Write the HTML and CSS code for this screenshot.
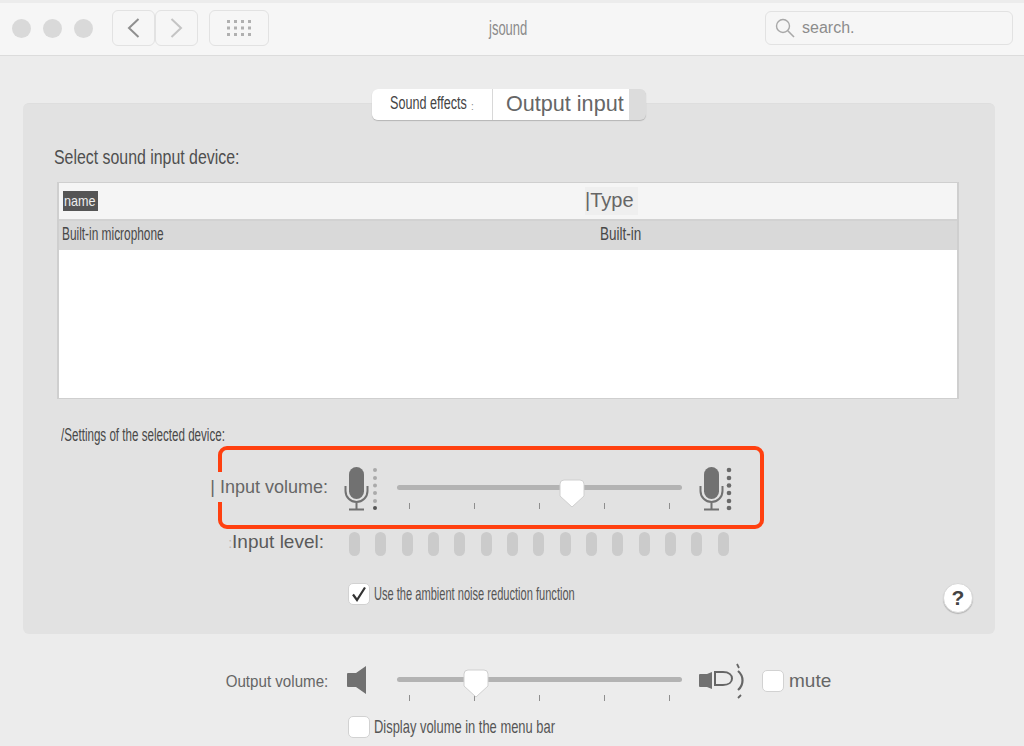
FILE: index.html
```html
<!DOCTYPE html>
<html lang="en">
<head>
    <meta charset="UTF-8">
    <title>jsound</title>
    <link rel="stylesheet" href="styles.css">
</head>
<body>
    <header class="toolbar">
        <div class="lights">
            <span class="light"></span>
            <span class="light"></span>
            <span class="light"></span>
        </div>
        <div class="nav">
            <button class="tool-btn nav-btn">
                <svg width="13" height="20" viewBox="0 0 13 20"><path d="M11.500 1 2 10l9.500 9" fill="none" stroke="#8f8f8f" stroke-width="2"/></svg>
            </button>
            <button class="tool-btn nav-btn">
                <svg width="13" height="20" viewBox="0 0 13 20"><path d="M1.500 1 11 10l-9.500 9" fill="none" stroke="#c4c4c4" stroke-width="2"/></svg>
            </button>
        </div>
        <button class="tool-btn grid-btn">
            <svg width="24" height="16" viewBox="0 0 24 16" fill="#b0b0b0">
                <rect x="0" y="0" width="3" height="3"/><rect x="7" y="0" width="3" height="3"/><rect x="14" y="0" width="3" height="3"/><rect x="21" y="0" width="3" height="3"/>
                <rect x="0" y="6.500" width="3" height="3"/><rect x="7" y="6.500" width="3" height="3"/><rect x="14" y="6.500" width="3" height="3"/><rect x="21" y="6.500" width="3" height="3"/>
                <rect x="0" y="13" width="3" height="3"/><rect x="7" y="13" width="3" height="3"/><rect x="14" y="13" width="3" height="3"/><rect x="21" y="13" width="3" height="3"/>
            </svg>
        </button>
        <div class="title"><span class="narrow title-text">jsound</span></div>
        <div class="search">
            <svg width="20" height="20" viewBox="0 0 20 20"><circle cx="8" cy="8" r="6.500" fill="none" stroke="#a8a8a8" stroke-width="1.400"/><path d="M12.800 12.800 19 19" stroke="#a8a8a8" stroke-width="1.600"/></svg>
            <span>search.</span>
        </div>
    </header>

    <main>
        <section class="panel">
            <div class="tabs">
                <div class="tab tab-sound">
                    <span class="narrow sound-text">Sound effects</span>
                    <span class="tab-mark">:</span>
                </div>
                <div class="tab tab-output">Output input</div>
            </div>

            <p class="device-title"><span class="narrow device-text">Select sound input device:</span></p>

            <div class="device-table">
                <div class="table-head">
                    <span class="col-name"><span class="narrow name-text">name</span></span>
                    <span class="col-type">|Type</span>
                </div>
                <div class="table-row">
                    <span class="cell-name"><span class="narrow mic-text">Built-in microphone</span></span>
                    <span class="narrow type-text">Built-in</span>
                </div>
            </div>

            <p class="settings-title"><span class="narrow settings-text">/Settings of the selected device:</span></p>

            <div class="input-volume">
                <div class="highlight"></div>
                <div class="row-label"><span class="label-text">| Input volume:</span></div>
                <svg class="mic" width="25" height="45" viewBox="0 0 25 45">
                    <rect x="5" y="1" width="15" height="32" rx="7.500" fill="#717171"/>
                    <path d="M1.500 20v5a11 11 0 0 0 22 0v-5M12.500 36v7M5 43.500h15" fill="none" stroke="#717171" stroke-width="2"/>
                </svg>
                <svg class="dots" width="6" height="44" viewBox="0 0 6 44">
                    <circle cx="3" cy="3" r="2" fill="#aaa"/><circle cx="3" cy="11" r="2" fill="#aaa"/><circle cx="3" cy="18.500" r="2" fill="#aaa"/><circle cx="3" cy="26" r="2" fill="#aaa"/><circle cx="3" cy="34" r="2" fill="#aaa"/><circle cx="3" cy="41" r="2" fill="#555"/>
                </svg>
                <div class="slider slider-input">
                    <div class="track"></div>
                    <svg class="thumb" width="26" height="29" viewBox="0 0 26 29"><path d="M1 5a4 4 0 0 1 4-4h16a4 4 0 0 1 4 4v12L13 28 1 17z" fill="#fff" stroke="#d0d0d0"/></svg>
                    <div class="ticks"><i></i><i></i><i></i><i></i><i></i></div>
                </div>
                <svg class="mic" width="25" height="45" viewBox="0 0 25 45">
                    <rect x="5" y="1" width="15" height="32" rx="7.500" fill="#717171"/>
                    <path d="M1.500 20v5a11 11 0 0 0 22 0v-5M12.500 36v7M5 43.500h15" fill="none" stroke="#717171" stroke-width="2"/>
                </svg>
                <svg class="dots dots-full" width="6" height="44" viewBox="0 0 6 44" fill="#6a6a6a">
                    <circle cx="3" cy="3" r="2.300"/><circle cx="3" cy="11" r="2.300"/><circle cx="3" cy="18.500" r="2.300"/><circle cx="3" cy="26" r="2.300"/><circle cx="3" cy="34" r="2.300"/><circle cx="3" cy="41" r="2.300"/>
                </svg>
            </div>

            <div class="input-level">
                <div class="row-label"><span class="level-mark">:</span>Input level:</div>
                <div class="level-bars">
                    <i></i><i></i><i></i><i></i><i></i><i></i><i></i><i></i><i></i><i></i><i></i><i></i><i></i><i></i><i></i>
                </div>
            </div>

            <div class="noise-row">
                <span class="checkbox">
                    <svg width="16" height="16" viewBox="0 0 16 16"><path d="M2 8.500 6 14 14 1.500" fill="none" stroke="#333" stroke-width="2.200"/></svg>
                </span>
                <span class="check-label"><span class="narrow noise-text">Use the ambient noise reduction function</span></span>
                <button class="help">?</button>
            </div>
        </section>

        <div class="output-volume">
            <div class="row-label"><span class="narrow output-text">Output volume:</span></div>
            <svg class="speaker" width="20" height="28" viewBox="0 0 20 28"><path d="M1 7h8L19 0v28L9 21H1a1 1 0 0 1-1-1V8a1 1 0 0 1 1-1z" fill="#717171"/></svg>
            <div class="slider slider-output">
                <div class="track"></div>
                <svg class="thumb" width="26" height="29" viewBox="0 0 26 29"><path d="M1 5a4 4 0 0 1 4-4h16a4 4 0 0 1 4 4v12L13 28 1 17z" fill="#fff" stroke="#d0d0d0"/></svg>
                <div class="ticks"><i></i><i></i><i></i><i></i><i></i></div>
            </div>
            <svg class="speaker-loud" width="47" height="38" viewBox="0 0 47 38">
                <path d="M1 11h7l5-2v17l-5-2H1a1 1 0 0 1-1-1V12a1 1 0 0 1 1-1z" fill="#717171"/>
                <path d="M16 9h8c6 0 9 3 9 6.500S30 22 24 22h-8z" fill="none" stroke="#666" stroke-width="2"/>
                <path d="M39 8c6 5 6 14 0 19" fill="none" stroke="#666" stroke-width="2.200"/>
                <path d="M38 1l2 4M42 32l-3 3" fill="none" stroke="#666" stroke-width="1.800"/>
            </svg>
            <span class="checkbox mute-box"></span>
            <span class="mute-label">mute</span>
        </div>

        <div class="menu-row">
            <span class="checkbox"></span>
            <span class="check-label"><span class="narrow menu-text">Display volume in the menu bar</span></span>
        </div>
    </main>
</body>
</html>
```

FILE: styles.css
```css
html, body {
    margin: 0;
    height: 746px;
    overflow: hidden;
}

body {
    font-family: "Liberation Sans", Arial, sans-serif;
    background-color: #ececec;
    color: #5a5a5a;
}

p {
    margin: 0;
}

button {
    font-family: inherit;
    padding: 0;
}

/* the original text is squeezed horizontally, no narrow font is available */
.narrow {
    display: inline-block;
    white-space: nowrap;
    transform-origin: left center;
}

/* toolbar */

.toolbar {
    display: flex;
    align-items: center;
    box-sizing: border-box;
    height: 53px;
    margin-top: 3px;
    padding: 0 11px 2px 12px;
    background-color: #f6f6f6;
    border-bottom: 1px solid #dcdcdc;
}

.lights {
    display: flex;
    gap: 12px;
    margin-right: 19px;
}

.light {
    width: 19px;
    height: 19px;
    border-radius: 50%;
    background-color: #d9d9d9;
}

.nav {
    display: flex;
    margin-right: 11px;
}

.tool-btn {
    display: flex;
    align-items: center;
    justify-content: center;
    height: 36px;
    box-sizing: border-box;
    background-color: #f6f6f6;
    border: 1px solid #e2e2e2;
    border-radius: 6px;
}

.nav-btn {
    width: 43px;
}

.grid-btn {
    width: 60px;
}

.title {
    flex: 1;
    padding-left: 220px;
    font-size: 20px;
    color: #8a8a8a;
}

.title-text {
    transform: scaleX(.65);
}

.search {
    display: flex;
    align-items: center;
    gap: 7px;
    box-sizing: border-box;
    width: 248px;
    height: 34px;
    padding-left: 9px;
    border: 1px solid #e2e2e2;
    border-radius: 6px;
    font-size: 16px;
    color: #8c8c8c;
}

/* panel */

.panel {
    box-sizing: border-box;
    height: 531px;
    margin: 47px 29px 0 23px;
    background-color: #e2e2e2;
    border-radius: 6px;
    border-top: 1px solid #dedede;
}

.tabs {
    display: flex;
    width: 274px;
    height: 31px;
    margin: -15px auto 0;
    background-color: #dcdcdc;
    border-radius: 6px;
    box-shadow: 0 1px 1px #b5b5b5;
}

.tab {
    display: flex;
    align-items: center;
    box-sizing: border-box;
    background-color: #fff;
}

.tab-sound {
    width: 121px;
    padding: 0 0 3px 18px;
    border-radius: 6px 0 0 6px;
    border-right: 1px solid #d8d8d8;
    font-size: 18px;
    color: #444;
}

.sound-text {
    width: 81px;
    transform: scaleX(.7);
}

.tab-mark {
    font-size: 10px;
    margin-top: 7px;
    color: #888;
}

.tab-output {
    width: 136px;
    padding: 0 0 2px 13px;
    font-size: 21.600px;
    color: #666;
}

.device-title {
    margin: 27px 0 0 31px;
    font-size: 20px;
    line-height: 20px;
    color: #4f4f4f;
}

.device-text {
    transform: scaleX(.794);
}

.device-table {
    box-sizing: border-box;
    width: 902px;
    height: 217px;
    margin: 15px 0 0 34px;
    background-color: #fff;
    border: 2px solid #cfcfcf;
    border-bottom-width: 1px;
    border-top-width: 1px;
}

.table-head {
    display: flex;
    align-items: center;
    height: 36px;
    background-color: #f5f5f5;
    border-bottom: 2px solid #d2d2d2;
}

.col-name {
    box-sizing: border-box;
    width: 35px;
    margin-left: 4px;
    padding-left: 1px;
    line-height: 20px;
    font-size: 15px;
    color: #eee;
    background-color: #555;
}

.name-text {
    transform: scaleX(.84);
}

.col-type {
    margin-left: 487px;
    padding: 2px 4px 3px 0;
    font-size: 20px;
    color: #666;
    background-color: #efefef;
}

.table-row {
    display: flex;
    align-items: center;
    box-sizing: border-box;
    height: 29px;
    padding-bottom: 2px;
    background-color: #d9d9d9;
    font-size: 18px;
    color: #484848;
}

.cell-name {
    width: 538px;
    margin-left: 3px;
}

.mic-text {
    transform: scaleX(.66);
}

.type-text {
    transform: scaleX(.75);
}

.settings-title {
    margin: 28px 0 0 38px;
    font-size: 18px;
    line-height: 16px;
    color: #484848;
}

.settings-text {
    transform: scaleX(.645);
}

/* volume rows */

.input-volume {
    position: relative;
    display: flex;
    align-items: flex-start;
    height: 83px;
    margin-top: 3px;
}

.highlight {
    position: absolute;
    left: 195px;
    top: 0;
    width: 546px;
    height: 83px;
    box-sizing: border-box;
    border: 4px solid #ff4010;
    border-radius: 9px;
}

.row-label {
    position: relative;
    width: 305px;
    text-align: right;
    font-size: 18px;
    line-height: 30px;
    color: #666;
}

.input-volume .row-label {
    margin-top: 26px;
}

.label-text {
    display: inline-block;
    background-color: #e2e2e2;
}

.mic {
    position: relative;
    margin-top: 20px;
}

.input-volume .mic:nth-of-type(1) {
    margin-left: 16px;
}

.dots {
    position: relative;
    margin: 21px 0 0 3px;
}

.dots-full {
    margin-left: 2px;
}

.slider {
    position: relative;
    width: 285px;
}

.slider-input {
    margin: 39px 17px 0 19px;
}

.track {
    height: 5px;
    background-color: #b3b3b3;
    border-radius: 3px;
}

.thumb {
    position: absolute;
}

.slider-input .thumb {
    top: -6px;
    left: 162px;
}

.slider-output .thumb {
    top: -8px;
    left: 66px;
}

.ticks {
    display: flex;
    justify-content: space-between;
    padding: 13px 12px 0;
}

.ticks i {
    width: 1px;
    height: 6px;
    background-color: #8e8e8e;
}

.input-level {
    display: flex;
    align-items: center;
    height: 24px;
    margin-top: 3px;
}

.input-level .row-label {
    box-sizing: border-box;
    padding: 0 4px 3px 0;
    font-size: 19px;
    color: #5a5a5a;
}

.level-mark {
    font-size: 14px;
    color: #b8b8b8;
}

.level-bars {
    display: flex;
    justify-content: space-between;
    width: 380px;
    margin-left: 21px;
}

.level-bars i {
    width: 11px;
    height: 24px;
    border-radius: 6px;
    background-color: #cbcbcb;
}

.noise-row {
    display: flex;
    align-items: flex-start;
    margin-top: 27px;
    padding: 0 22px 0 325px;
}

.checkbox {
    display: flex;
    align-items: center;
    justify-content: center;
    box-sizing: border-box;
    width: 22px;
    height: 22px;
    background-color: #fff;
    border: 1px solid #d2d2d2;
    border-radius: 5px;
}

.check-label {
    margin-left: 4px;
    font-size: 19px;
    line-height: 22px;
    color: #555;
}

.noise-text {
    transform: scaleX(.583);
}

.menu-text {
    transform: scaleX(.68);
}

.help {
    width: 30px;
    height: 30px;
    margin-left: auto;
    background-color: #fff;
    border: 1px solid #d8d8d8;
    border-radius: 50%;
    box-shadow: 0 1px 1px #b5b5b5;
    font-size: 21px;
    font-weight: bold;
    color: #444;
}

/* below the panel */

.output-volume {
    display: flex;
    align-items: flex-start;
    height: 50px;
    margin: 32px 0 0 23px;
}

.output-volume .row-label {
    padding-top: 1px;
    line-height: 30px;
    font-size: 17px;
}

.output-text {
    transform: scaleX(.89);
    transform-origin: right center;
}

.speaker {
    margin-left: 19px;
}

.slider-output {
    margin: 11px 17px 0 30px;
}

.speaker-loud {
    margin-top: -3px;
}

.mute-box {
    margin: 4px 0 0 16px;
}

.mute-label {
    margin: 4px 0 0 5px;
    line-height: 22px;
    font-size: 19px;
    color: #666;
}

.menu-row {
    display: flex;
    margin-left: 348px;
}
```
